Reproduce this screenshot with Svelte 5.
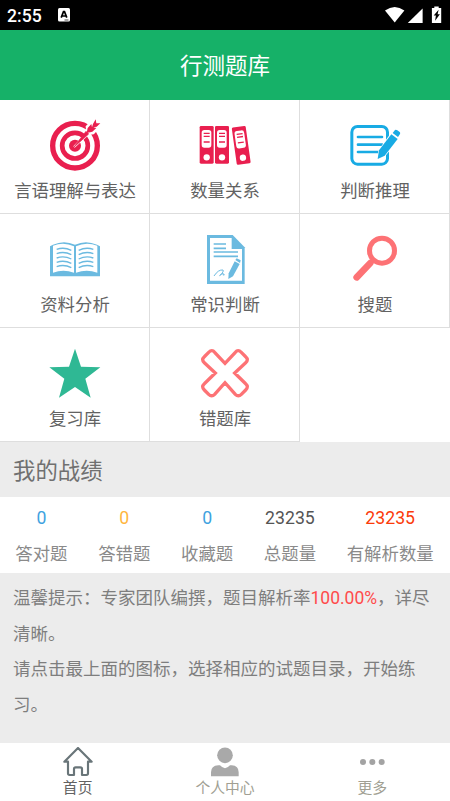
<script lang="ts">
    interface Category {
        label: string;
        icon: string;
    }

    const categories: Category[] = [
        { label: '言语理解与表达', icon: 'target' },
        { label: '数量关系', icon: 'binders' },
        { label: '判断推理', icon: 'note' },
        { label: '资料分析', icon: 'book' },
        { label: '常识判断', icon: 'document' },
        { label: '搜题', icon: 'search' },
        { label: '复习库', icon: 'star' },
        { label: '错题库', icon: 'cross' }
    ];

    const stats = [
        { value: '0', label: '答对题', tone: 'blue' },
        { value: '0', label: '答错题', tone: 'orange' },
        { value: '0', label: '收藏题', tone: 'blue' },
        { value: '23235', label: '总题量', tone: 'dark' },
        { value: '23235', label: '有解析数量', tone: 'red' }
    ];

    const tabs = [
        { label: '首页', icon: 'home' },
        { label: '个人中心', icon: 'user' },
        { label: '更多', icon: 'more' }
    ];

    let active = $state('home');
</script>

<!-- one binder, standing upright in a 42x113 box -->
{#snippet binder()}
    <rect width="42" height="113" rx="4" fill="#e91f4f" />
    <rect x="6" y="12" width="29" height="53" rx="8" fill="#fff" />
    <path d="M12 22h18M12 31h18M12 48h18" stroke="#e91f4f" stroke-width="4" />
    <circle cx="21" cy="94" r="9.5" fill="#fff" />
{/snippet}

<div class="app">
    <div class="status-bar">
        <span class="time">2:55</span>
        <svg class="keyboard" width="12" height="14" viewBox="0 0 12 14">
            <rect width="12" height="13.5" rx="1.5" fill="#fff" />
            <path d="M3.2 9.6 5.5 3.6h1l2.3 6M4 8h4" fill="none" stroke="#000" stroke-width="1.7" />
            <path d="M6.5 12h4" stroke="#777" stroke-width="1.3" />
        </svg>
        <svg class="signals" width="57" height="18" viewBox="0 0 57 18">
            <path d="M0 4.6Q9.7-2.4 19.4 4.6L9.7 16.6Z" fill="#fff" />
            <path d="M37.6 2.5V17H22.8Z" fill="#fff" />
            <path d="M49.3 2V.4h4.4V2h2.5v15h-9.3V2Z" fill="#fff" />
            <path d="M53.6 3.7 48.7 9.6h2.2l-.8 5.2 4.8-6.6h-2.3Z" fill="#000" />
        </svg>
    </div>

    <header>行测题库</header>

    <div class="grid">
        {#each categories as item}
            <div class="cell">
                <svg class="cell-icon" viewBox="0 0 150 150">
                    {#if item.icon === 'target'}
                        <g fill="none" stroke="#e91f4f">
                            <circle cx="75" cy="77" r="67" stroke-width="16" />
                            <circle cx="75" cy="77" r="38.5" stroke-width="14" />
                        </g>
                        <circle cx="75" cy="77" r="18" fill="#e91f4f" />
                        <path d="M72 81 112 39 110 20 134-4 139 10 154 15 130 40 115 42Z" fill="#fff" stroke="#fff" stroke-width="6" />
                        <path d="M70 83 108 34 116 42Z" fill="#e91f4f" stroke="#e91f4f" stroke-width="2" />
                        <path d="M110 39 113 24 124 12 126 22 129 12 137-2 139 10 151 10 140 20 130 22 139 24 127 35Z" fill="#e91f4f" />
                    {:else if item.icon === 'binders'}
                        <g transform="translate(-1 18)">{@render binder()}</g>
                        <g transform="translate(45 18)">{@render binder()}</g>
                        <g transform="translate(95 23) rotate(-8)">{@render binder()}</g>
                    {:else if item.icon === 'note'}
                        <rect x="5.5" y="19.5" width="107" height="113" rx="17" fill="none" stroke="#18abe4" stroke-width="9" />
                        <path d="M24 51h72M24 74h72M24 96h60" stroke="#18abe4" stroke-width="8" stroke-linecap="round" />
                        <path d="M120 43 147 58 106 108 83 117 85 91Z" fill="#fff" />
                        <path d="M124 43 143 57 104 107 83 117 87 91Z" fill="#18abe4" />
                        <path d="M128 39 135 30Q138 28 142 31L149 36Q152 39 150 42L144 51Z" fill="#18abe4" />
                    {:else if item.icon === 'book'}
                        <path d="M0 37 9 32Q42 17 75 32Q108 17 141 32L150 37V127H0Z" fill="#6bbae0" />
                        <path d="M9 35Q42 23 72 37V116Q40 105 9 116ZM78 37Q108 23 142 35V116Q110 105 78 116Z" fill="#fff" />
                        <g fill="none" stroke="#6bbae0" stroke-width="4">
                            {#each [46, 59, 72, 85, 98] as y}
                                <path d="M20 {y}q22-8 44 3M86 {y + 3}q22-11 44-3" />
                            {/each}
                        </g>
                    {:else if item.icon === 'document'}
                        <path d="M21 3H98L134 40V150H21Z" fill="#6bbae0" />
                        <path d="M30 12H95V45H126V140H30Z" fill="#fff" />
                        <path d="M41 30H78M41 43H78M41 54H114M41 67H114" stroke="#6bbae0" stroke-width="5" />
                        <path d="M42 126Q55 106 69 108Q73 112 59 125Q68 116 70 119Q67 126 74 122" fill="none" stroke="#6bbae0" stroke-width="3" />
                        <path d="M104 82 119 90 99 127 85 135 86 118Z" fill="#6bbae0" />
                        <path d="M106 78 110 73 122 79 120 87Z" fill="#6bbae0" />
                    {:else if item.icon === 'search'}
                        <circle cx="96" cy="50" r="37.5" fill="none" stroke="#fd7275" stroke-width="15" />
                        <path d="M71 76 62 85" stroke="#fd7275" stroke-width="9" />
                        <path d="M61 87 20 130" stroke="#fd7275" stroke-width="20" stroke-linecap="round" />
                    {:else if item.icon === 'star'}
                        <path d="M75 2 93 56 151 58 106 92 122 149 75 117 27 149 43 92-2 58 57 56Z" fill="#2fb894" />
                    {:else}
                        <path
                            d="M75 46 106 13Q114 3 124 13L137 26Q147 35 137 44L104 75 137 107Q147 116 137 126L124 139Q115 148 106 139L75 104 44 139Q35 148 26 139L13 126Q3 116 13 107L46 75 13 44Q3 35 13 26L26 13Q36 3 44 13Z"
                            fill="none"
                            stroke="#fd7275"
                            stroke-width="10"
                        />
                    {/if}
                </svg>
                <span class="cell-label">{item.label}</span>
            </div>
        {/each}
    </div>

    <h2>我的战绩</h2>

    <div class="stats">
        {#each stats as stat}
            <div class="stat">
                <span class="value {stat.tone}">{stat.value}</span>
                <span class="stat-label">{stat.label}</span>
            </div>
        {/each}
    </div>

    <div class="tips">
        <p>温馨提示：专家团队编撰，题目解析率<em>100.00%</em>，详尽清晰。</p>
        <p>请点击最上面的图标，选择相应的试题目录，开始练习。</p>
    </div>

    <nav>
        {#each tabs as tab}
            <button class="tab" class:active={active === tab.icon} onclick={() => (active = tab.icon)}>
                <svg width="30" height="30" viewBox="0 0 90 90">
                    {#if tab.icon === 'home'}
                        <path
                            d="M45 3 4 44H15V79Q15 84 20 84H33V66Q33 61 38 61H52Q57 61 57 66V84H70Q75 84 75 79V44H86Z"
                            fill="none"
                            stroke="#697579"
                            stroke-width="6.5"
                            stroke-linejoin="round"
                        />
                    {:else if tab.icon === 'user'}
                        <circle cx="45" cy="25" r="23.5" fill="#a9a9a9" />
                        <path d="M3 88V76Q3 56 25 55H30Q45 72 60 55H65Q86 56 86 76V88Z" fill="#a9a9a9" />
                    {:else}
                        <g fill="#a3a3a3">
                            <circle cx="18" cy="45" r="9" />
                            <circle cx="46" cy="45" r="9" />
                            <circle cx="74" cy="45" r="9" />
                        </g>
                    {/if}
                </svg>
                <span>{tab.label}</span>
            </button>
        {/each}
    </nav>
</div>

<style>
    :global(body) {
        margin: 0;
        background: #fff;
    }

    .app {
        display: flex;
        flex-direction: column;
        width: 450px;
        height: 801px;
        overflow: hidden;
        background: #fff;
        font-family: Roboto, 'Noto Sans CJK SC', sans-serif;
    }

    .status-bar {
        display: flex;
        align-items: center;
        flex: none;
        box-sizing: border-box;
        height: 30px;
        padding: 0 8px 0 7px;
        background: #000;
        color: #fff;
    }

    .time {
        width: 51px;
        padding-top: 2px;
        font-size: 17.6px;
        font-weight: 500;
        line-height: 28px;
    }

    .signals {
        margin-left: auto;
    }

    header {
        flex: none;
        height: 70px;
        background: #16b168;
        color: #fff;
        font-size: 22.5px;
        line-height: 73px;
        text-align: center;
    }

    .grid {
        display: grid;
        grid-template-columns: repeat(3, 150px);
        grid-auto-rows: 114px;
        flex: none;
    }

    .cell {
        display: flex;
        flex-direction: column;
        align-items: center;
        box-sizing: border-box;
        padding-top: 20px;
        border-right: 1px solid #dedede;
        border-bottom: 1px solid #dedede;
    }

    .cell-icon {
        width: 50px;
        height: 50px;
        margin-left: 1px;
        overflow: visible;
    }

    .cell-label {
        margin-top: 8px;
        padding-left: 1px;
        color: #626262;
        font-size: 17.4px;
        line-height: 26px;
    }

    h2 {
        flex: none;
        height: 55px;
        margin: 0;
        padding-left: 13px;
        background: #ececec;
        color: #707070;
        font-size: 22.4px;
        font-weight: 400;
        line-height: 58px;
    }

    .stats {
        display: flex;
        justify-content: space-around;
        flex: none;
        box-sizing: border-box;
        height: 76px;
        padding-right: 1px;
    }

    .stat {
        display: flex;
        flex-direction: column;
        align-items: center;
    }

    .value {
        height: 38px;
        font-size: 17.7px;
        line-height: 42px;
    }

    .blue {
        color: #3ea2e0;
    }

    .orange {
        color: #ffb640;
    }

    .dark {
        color: #555;
    }

    .red {
        color: #fb3b0b;
    }

    .stat-label {
        color: #8a8a8a;
        font-size: 17.4px;
        line-height: 39px;
    }

    .tips {
        flex: none;
        box-sizing: border-box;
        height: 170px;
        padding: 8px 12px 0 13px;
        background: #ececec;
        color: #7e7e7e;
        font-size: 17.5px;
        line-height: 35.7px;
    }

    .tips p {
        margin: 0;
    }

    .tips em {
        color: #ff4b4b;
        font-style: normal;
    }

    nav {
        display: grid;
        grid-template-columns: repeat(3, 1fr);
        flex: 1;
        padding: 0 4px;
    }

    .tab {
        display: flex;
        flex-direction: column;
        align-items: center;
        padding: 4px 0 0;
        border: none;
        background: none;
        color: #a19f93;
        font-family: inherit;
        font-size: 14.8px;
        line-height: 22px;
    }

    .tab.active {
        color: #626262;
    }
</style>
